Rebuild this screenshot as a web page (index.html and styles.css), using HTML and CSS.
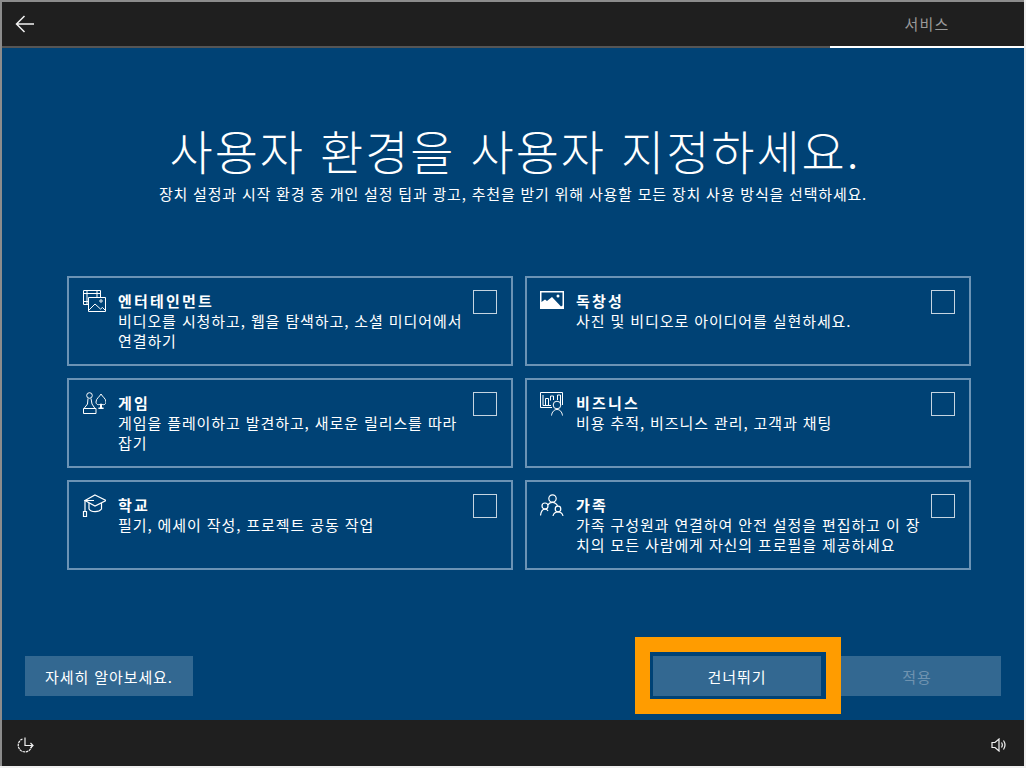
FILE: index.html
```html
<!DOCTYPE html>
<html lang="ko">
<head>
    <meta charset="UTF-8">
    <meta name="viewport" content="width=device-width, initial-scale=1.0">
    <title>사용자 환경을 사용자 지정하세요.</title>
    <link rel="stylesheet" href="styles.css">
</head>
<body>
    <div class="oobe-window">
        <header class="top-bar">
            <button class="back-btn" aria-label="뒤로">
                <svg width="20" height="18" viewBox="0 0 20 18" fill="none" stroke="#f2f2f2" stroke-width="1.5">
                    <path d="M9.5 1 L1.5 9 L9.5 17 M1.5 9 H19"/>
                </svg>
            </button>
            <div class="step-tab">서비스</div>
        </header>

        <main class="content">
            <h1 class="page-title">사용자 환경을 사용자 지정하세요.</h1>
            <p class="page-desc">장치 설정과 시작 환경 중 개인 설정 팁과 광고, 추천을 받기 위해 사용할 모든 장치 사용 방식을 선택하세요.</p>

            <div class="card-grid">
                <div class="card">
                    <svg class="card-icon" viewBox="0 0 24 24" fill="none" stroke="#fff">
                        <path d="M6.500 14.500 H1.500 V0.500 H18.500 V7.500 M1.500 3.500 H18.500 M1.500 11.500 H6.500 M5 0.500 V14 M15 0.500 V7"/>
                        <path d="M6.500 7.500 H23.500 V21.500 H6.500 Z"/>
                        <path d="M7 20 L13 14 L18.500 19 L20.500 17.500 L23 20"/>
                        <circle cx="19" cy="11" r="1.200"/>
                    </svg>
                    <div class="card-text">
                        <h3>엔터테인먼트</h3>
                        <p>비디오를 시청하고, 웹을 탐색하고, 소셜 미디어에서 연결하기</p>
                    </div>
                    <span class="check-box"></span>
                </div>

                <div class="card">
                    <svg class="card-icon" viewBox="0 0 24 24" fill="none">
                        <path fill="#fff" d="M0 1 H24 V19 H0 Z"/>
                        <path fill="#004275" d="M1.500 2.500 H22.500 V15.500 L21 16.500 L12 7 L7 11 L5 9.500 L1.500 12 Z"/>
                        <circle cx="18" cy="6" r="1.500" fill="#fff"/>
                    </svg>
                    <div class="card-text">
                        <h3>독창성</h3>
                        <p>사진 및 비디오로 아이디어를 실현하세요.</p>
                    </div>
                    <span class="check-box"></span>
                </div>

                <div class="card">
                    <svg class="card-icon" viewBox="0 0 24 24" fill="none" stroke="#fff">
                        <circle cx="7.500" cy="3.500" r="2.800"/>
                        <path d="M6 6.500 L5.500 12 L2 16.500 H13 L10 12 L9 6.500"/>
                        <path d="M1.500 16.500 H14 V21.500 H1.500 Z"/>
                        <path d="M19 2 C17.500 5 14 6.500 14 10 C14 12.500 16.500 13.500 18.500 12 V16 H16.500 M19 2 C20.500 5 24 6.500 24 10 C24 12.500 21.500 13.500 19.500 12 V16 H21.500 M16.500 16.500 H21.500"/>
                    </svg>
                    <div class="card-text">
                        <h3>게임</h3>
                        <p>게임을 플레이하고 발견하고, 새로운 릴리스를 따라잡기</p>
                    </div>
                    <span class="check-box"></span>
                </div>

                <div class="card">
                    <svg class="card-icon" viewBox="0 0 24 24" fill="none" stroke="#fff">
                        <path d="M12 15.500 H0.500 V0.500 H22.500 V13"/>
                        <path d="M3 3 V13.500 H11"/>
                        <path d="M5.500 13 V6.500 H8.500 V13 M10.500 8.500 V4 H13.500 V8 M17.500 8 V3 H20.500 V13"/>
                        <circle cx="17" cy="13" r="3.800"/>
                        <path d="M11.500 23.500 C12 20 14 17.500 17 17.500 C20 17.500 22 20 22.500 23.500"/>
                    </svg>
                    <div class="card-text">
                        <h3>비즈니스</h3>
                        <p>비용 추적, 비즈니스 관리, 고객과 채팅</p>
                    </div>
                    <span class="check-box"></span>
                </div>

                <div class="card">
                    <svg class="card-icon" viewBox="0 0 24 24" fill="none" stroke="#fff" stroke-width="1.200">
                        <path d="M13 1 L24 6.500 L13 12 L3 6.500 Z"/>
                        <path d="M7 9 V15 C9 18.500 17 18.500 19.500 15 V9"/>
                        <path d="M12 6.500 H3 V17.500"/>
                        <path d="M1.500 17.500 H4.500 V22.500 H1.500 Z"/>
                    </svg>
                    <div class="card-text">
                        <h3>학교</h3>
                        <p>필기, 에세이 작성, 프로젝트 공동 작업</p>
                    </div>
                    <span class="check-box"></span>
                </div>

                <div class="card">
                    <svg class="card-icon" viewBox="0 0 24 24" fill="none" stroke="#fff" stroke-width="1.200">
                        <circle cx="12.500" cy="4.500" r="3.700"/>
                        <circle cx="5" cy="12" r="3"/>
                        <circle cx="18" cy="15" r="2.800"/>
                        <path d="M0.500 21.500 C1 17.500 2.500 15.200 5 15.200 C6.500 15.200 7.500 16 8 17"/>
                        <path d="M8 11 C9 9 10.500 8.300 12.500 8.300 C14.500 8.300 17 10 17.500 12"/>
                        <path d="M13 22 C13.500 19.500 15.500 18 18 18 C20.500 18 22.500 19.500 23 22"/>
                    </svg>
                    <div class="card-text">
                        <h3>가족</h3>
                        <p>가족 구성원과 연결하여 안전 설정을 편집하고 이 장치의 모든 사람에게 자신의 프로필을 제공하세요</p>
                    </div>
                    <span class="check-box"></span>
                </div>
            </div>

            <div class="action-row">
                <button class="oobe-btn learn-btn">자세히 알아보세요.</button>
                <div class="focus-mark">
                    <button class="oobe-btn skip-btn">건너뛰기</button>
                </div>
                <button class="oobe-btn apply-btn" disabled>적용</button>
            </div>
        </main>

        <footer class="bottom-bar">
            <svg class="ease-icon" width="18" height="16" viewBox="0 0 18 16" fill="none" stroke="#f2f2f2" stroke-width="1.200">
                <path d="M5.500 2 A6.700 6.700 0 1 0 14.500 9.500" stroke-dasharray="2.500 0.700"/>
                <path d="M8 0.500 V8.500 H16 M13.500 6 L16 8.500 L13.500 11"/>
            </svg>
            <svg class="volume-icon" width="16" height="14" viewBox="0 0 16 14" fill="none" stroke="#f2f2f2" stroke-width="1.200">
                <path d="M1 4.500 H4 L8 1 V13 L4 9.500 H1 Z"/>
                <path d="M10.500 4.500 C11.500 6 11.500 8 10.500 9.500 M12.500 2.500 C14.500 5.500 14.500 8.500 12.500 11.500"/>
            </svg>
        </footer>
    </div>
</body>
</html>
```

FILE: styles.css
```css
* {
    box-sizing: border-box;
}

body {
    margin: 0;
    width: 1026px;
    height: 768px;
    overflow: hidden;
    background: #f0f0f0;
    font-family: "Noto Sans CJK KR", "Liberation Sans", sans-serif;
    color: #fff;
}

.oobe-window {
    display: flex;
    flex-direction: column;
    width: 1024px;
    height: 766px;
    border-top: 2px solid #8c8c8c;
    border-left: 2px solid #8c8c8c;
    background: #004275;
}

.top-bar {
    display: flex;
    justify-content: space-between;
    height: 46px;
    background: #1f1f1f;
    border-bottom: 2px solid #555;
    flex: none;
}

.back-btn {
    margin: 0;
    padding: 0 0 0 13px;
    height: 44px;
    border: none;
    background: none;
    display: flex;
    align-items: center;
}

.step-tab {
    width: 194px;
    height: 46px;
    padding-top: 11px;
    border-bottom: 2px solid #fff;
    text-align: center;
    font-size: 15px;
    letter-spacing: 1.2px;
    line-height: 21px;
    color: #9a9a9a;
}

.content {
    flex: 1;
    display: flex;
    flex-direction: column;
}

.page-title {
    margin: 0;
    padding: 68px 0 0 4px;
    text-align: center;
    font-size: 47px;
    letter-spacing: 1.9px;
    line-height: 68px;
    font-weight: 300;
}

.page-desc {
    margin: 0;
    text-align: center;
    font-size: 15px;
    letter-spacing: 0.8px;
    line-height: 20px;
}

.card-grid {
    display: grid;
    grid-template-columns: 446px 446px;
    grid-auto-rows: 90px;
    gap: 12px;
    margin: 72px 0 0 65px;
}

.card {
    display: flex;
    align-items: flex-start;
    padding: 12px 14px 0 13px;
    border: 2px solid #6b93b5;
}

.card-icon {
    flex: none;
    width: 24px;
    height: 24px;
}

.card-text {
    flex: 1;
    padding: 1px 0 0 12px;
}

.card-text h3 {
    margin: 0;
    font-size: 15px;
    letter-spacing: 2.2px;
    line-height: 20px;
    font-weight: 700;
}

.card-text p {
    margin: 0;
    font-size: 15px;
    letter-spacing: 0.9px;
    line-height: 20px;
    word-break: break-all;
}

.check-box {
    flex: none;
    width: 24px;
    height: 24px;
    margin-left: 8px;
    border: 1px solid #c5d4e1;
}

.action-row {
    display: flex;
    align-items: flex-start;
    margin: 67px 0 0 23px;
}

.oobe-btn {
    width: 168px;
    height: 40px;
    border: none;
    padding: 0;
    background: #336891;
    color: #fff;
    font-family: inherit;
    font-size: 15px;
    letter-spacing: 0.9px;
}

.learn-btn {
    margin: 19px 442px 0 0;
}

.focus-mark {
    border: 15px solid #ff9c00;
    padding: 4px 5px 3px 3px;
    background: #004275;
}

.skip-btn {
    display: block;
}

.apply-btn {
    width: 160px;
    margin-top: 19px;
    padding-right: 8px;
    color: #6f93b0;
}

.bottom-bar {
    flex: none;
    display: flex;
    justify-content: space-between;
    align-items: center;
    height: 46px;
    padding: 4px 17px 0 15px;
    background: #1f1f1f;
}
```
